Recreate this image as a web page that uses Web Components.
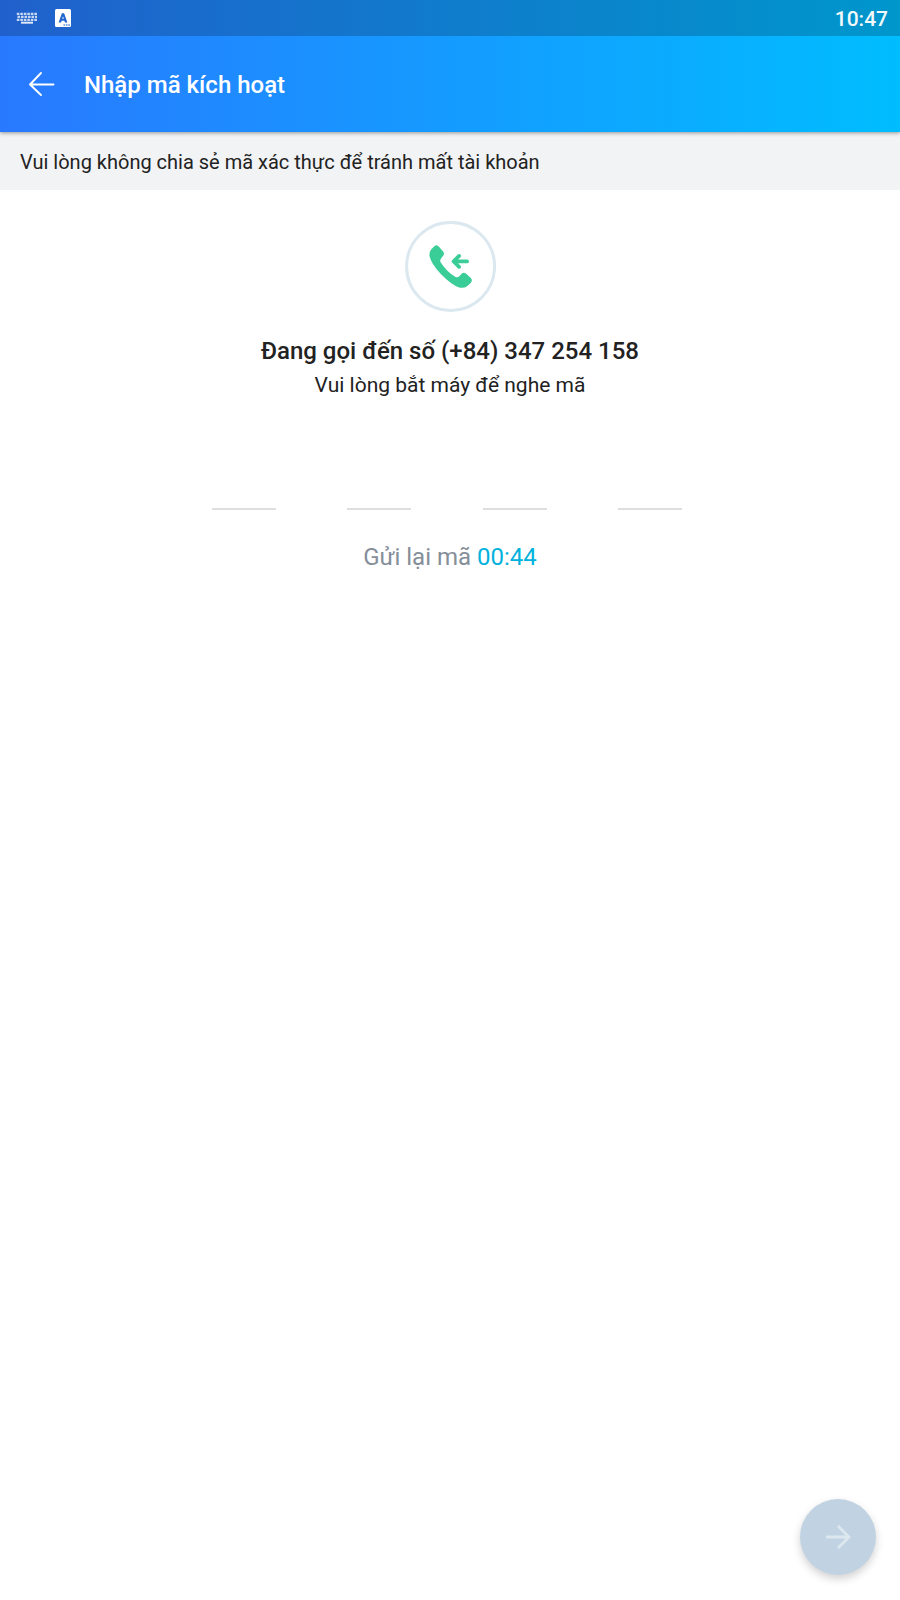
<!DOCTYPE html>
<html lang="vi">
<head>
<meta charset="utf-8">
<meta name="viewport" content="width=device-width, initial-scale=1">
<title>Nhập mã kích hoạt</title>
<style>
html, body { height: 100%; }
body { margin: 0; background: #fff; color: #222; font-family: Roboto, "Noto Sans", sans-serif; }
</style>
</head>
<body>
<activation-screen></activation-screen>
<script>
const define = (name, html) => customElements.define(name, class extends HTMLElement {
  constructor() {
    super();
    this.attachShadow({ mode: "open" }).innerHTML = html;
  }
});

define("status-bar", `
<style>
:host { display: flex; align-items: center; height: 36px; padding: 0 12px 0 16px; background: rgba(0,0,0,.2); color: #fff; }
.icons { display: flex; align-items: center; gap: 16px; flex: 1; }
svg { display: block; }
time { font-size: 21px; line-height: 34px; padding-top: 2px; font-weight: 500; opacity: .95; }
</style>
<div class="icons">
  <svg width="22" height="36" viewBox="0 0 22 36" fill="none" stroke="#fff" stroke-opacity=".75" aria-hidden="true">
    <path d="M.8 13.800H21.500M.8 19.800H21.500" stroke-width="2.200" stroke-dasharray="2.600 .9"/>
    <path d="M1.500 16.800H21" stroke-width="2.200" stroke-dasharray="2.600 .9"/>
    <path d="M5 22.700H17" stroke-width="2" stroke-opacity=".85"/>
  </svg>
  <svg width="18" height="36" viewBox="0 0 18 36" aria-hidden="true">
    <rect x="1" y="9" width="16" height="18" rx="1.500" fill="#fff"/>
    <path d="M4.600 22.500L7.900 13.200H10.100L13.400 22.500H11L10.400 20.700H7.600L7 22.500ZM8.200 18.800H9.800L9 16.200Z" fill="#1f66ce" fill-rule="evenodd"/>
    <path d="M9.500 25H16" stroke="#1f66ce" stroke-opacity=".7" stroke-width="1.500" stroke-dasharray="1.700 .7"/>
  </svg>
</div>
<time><slot></slot></time>`);

define("app-header", `
<style>
:host { display: flex; align-items: center; height: 96px; padding-left: 20px; gap: 20px; color: #fff; }
button { display: grid; place-items: center; width: 44px; height: 44px; padding: 0; border: 0; background: none; color: inherit; }
h1 { margin: 0; padding-top: 2px; font-size: 24px; line-height: 32px; font-weight: 500; }
</style>
<button type="button" aria-label="Quay lại">
  <svg width="28" height="28" viewBox="0 0 28 28" fill="none" stroke="currentColor" stroke-width="1.900" stroke-linecap="round" stroke-linejoin="round"><path d="M13 3L2 14.500L13 25M2 14.500H25.500"/></svg>
</button>
<h1><slot></slot></h1>`);

define("notice-strip", `
<style>
:host { display: block; padding: 16px 20px 14px; background: #f2f3f5; }
p { margin: 0; font-size: 20px; line-height: 28px; }
</style>
<p><slot></slot></p>`);

define("call-badge", `
<style>:host, svg { display: block; }</style>
<svg width="92" height="92" viewBox="0 0 92 92" role="img" aria-label="Cuộc gọi đến">
  <g transform="translate(.6 .4)">
  <circle cx="46" cy="46" r="44" fill="none" stroke="#dbe8ef" stroke-width="3"/>
  <path d="M29 26.500Q31.500 23.500 34.200 26.200L38.300 30.800Q40.300 33 38.700 35.200L36.300 38.300Q35 40.200 36.200 42Q42 51 50.500 56.300Q52.700 57.500 54.500 56L57 53.300Q59.200 51.400 61.500 53.400L66 57.300Q68.600 59.800 65.800 62.800L62.400 65.800Q59.500 68 54.500 67Q47 64.500 36.200 53.500Q26.500 43.200 24.900 35.500Q24.400 32.300 26.500 29.200Z" fill="#3bcd98"/>
  <path d="M62.500 41H49.500M54.500 35.500L49 41L54.500 46.500" fill="none" stroke="#3bcd98" stroke-width="3.700" stroke-linecap="round" stroke-linejoin="round"/>
  </g>
</svg>`);

define("code-entry", `
<style>
:host { display: block; width: 60%; }
fieldset { display: grid; grid-template-columns: repeat(4, 1fr); justify-items: center; margin: 0 2px 0 -4px; padding: 0; border: 0; }
input { box-sizing: border-box; width: 64px; height: 64px; padding: 0; border: 0; border-bottom: 2px solid #dedede; border-radius: 0; background: none; color: inherit; font: 500 32px/40px Roboto, sans-serif; text-align: center; outline: 0; }
</style>
<fieldset aria-label="Mã kích hoạt">
  <input type="text" inputmode="numeric" maxlength="1" aria-label="Chữ số 1">
  <input type="text" inputmode="numeric" maxlength="1" aria-label="Chữ số 2">
  <input type="text" inputmode="numeric" maxlength="1" aria-label="Chữ số 3">
  <input type="text" inputmode="numeric" maxlength="1" aria-label="Chữ số 4">
</fieldset>`);

define("resend-timer", `
<style>
:host { display: block; color: #858e99; font-size: 24px; line-height: 32px; }
::slotted(time) { color: #00b2dc; }
</style>
<slot></slot>`);

define("next-button", `
<style>
:host { display: block; }
button { display: grid; place-items: center; width: 76px; height: 76px; padding: 0; border: 0; border-radius: 50%; background: #c1d3e2; color: #dde7f0; box-shadow: 0 4px 8px rgba(0,0,0,.18); }
</style>
<button type="button" disabled aria-label="Tiếp tục">
  <svg width="28" height="28" viewBox="0 0 28 28" fill="none" stroke="currentColor" stroke-width="2.800"><path d="M2 14H25M14 3L25 14L14 25"/></svg>
</button>`);

define("activation-screen", `
<style>
:host { display: flex; flex-direction: column; min-height: 100%; box-sizing: border-box; }
header { position: relative; background: linear-gradient(90deg, #2979ff, #00bdff); box-shadow: 0 1px 4px rgba(0,0,0,.4); }
main { flex: 1; display: flex; flex-direction: column; align-items: center; padding-top: 30px; text-align: center; }
h2 { margin: 23px 0 0; font-size: 24px; line-height: 32px; font-weight: 500; }
p { margin: 4px 0 0; font-size: 21px; line-height: 28px; }
code-entry { margin-top: 47px; }
resend-timer { margin-top: 31px; }
footer { display: flex; justify-content: flex-end; padding: 24px 24px 25px; }
</style>
<header>
  <status-bar>10:47</status-bar>
  <app-header>Nhập mã kích hoạt</app-header>
</header>
<notice-strip>Vui lòng không chia sẻ mã xác thực để tránh mất tài khoản</notice-strip>
<main>
  <call-badge></call-badge>
  <h2>Đang gọi đến số (+84) 347 254 158</h2>
  <p>Vui lòng bắt máy để nghe mã</p>
  <code-entry></code-entry>
  <resend-timer>Gửi lại mã <time>00:44</time></resend-timer>
</main>
<footer><next-button></next-button></footer>`);
</script>
</body>
</html>
